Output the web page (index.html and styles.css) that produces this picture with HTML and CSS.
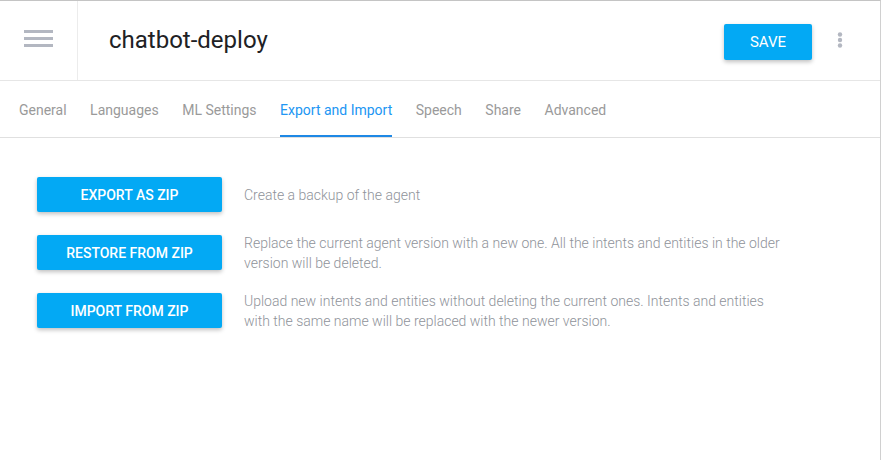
FILE: index.html
```html
<!DOCTYPE html>
<html>
<head>
<meta charset="utf-8">
<link rel="stylesheet" href="styles.css">
</head>
<body>
<div class="frame">
  <header class="header">
    <div class="menu-cell">
      <svg class="hamburger" width="30" height="18" viewBox="0 0 30 18">
        <rect x="0" y="0" width="29" height="3" fill="#b3b7c1"/>
        <rect x="0" y="7" width="29" height="3" fill="#b3b7c1"/>
        <rect x="0" y="14" width="29" height="3" fill="#b3b7c1"/>
      </svg>
    </div>
    <div class="title-cell">
      <h1 class="title">chatbot-deploy</h1>
      <div class="actions">
        <button class="btn save">SAVE</button>
        <svg class="kebab" width="6" height="16" viewBox="0 0 6 16">
          <circle cx="3" cy="2.5" r="2.2" fill="#b3b7c1"/>
          <circle cx="3" cy="8" r="2.2" fill="#b3b7c1"/>
          <circle cx="3" cy="13.5" r="2.2" fill="#b3b7c1"/>
        </svg>
      </div>
    </div>
  </header>
  <nav class="tabs">
    <span class="tab">General</span>
    <span class="tab">Languages</span>
    <span class="tab">ML Settings</span>
    <span class="tab active">Export and Import</span>
    <span class="tab">Speech</span>
    <span class="tab">Share</span>
    <span class="tab">Advanced</span>
  </nav>
  <main class="content">
    <div class="row">
      <button class="btn action">EXPORT AS ZIP</button>
      <p class="desc">Create a backup of the agent</p>
    </div>
    <div class="row">
      <button class="btn action">RESTORE FROM ZIP</button>
      <p class="desc">Replace the current agent version with a new one. All the intents and entities in the older version will be deleted.</p>
    </div>
    <div class="row">
      <button class="btn action">IMPORT FROM ZIP</button>
      <p class="desc">Upload new intents and entities without deleting the current ones. Intents and entities with the same name will be replaced with the newer version.</p>
    </div>
  </main>
</div>
</body>
</html>
```
FILE: styles.css
```css
html, body {
  margin: 0;
  padding: 0;
  background: #fff;
}
body {
  font-family: Roboto, "Liberation Sans", sans-serif;
}
.frame {
  width: 880px;
  height: 459px;
  border-top: 1px solid #c4c4c4;
  border-right: 1px solid #d0d0d0;
  background: #fff;
}
.header {
  display: flex;
  height: 79px;
  border-bottom: 1px solid #e6e6e6;
}
.menu-cell {
  width: 78px;
  border-right: 1px solid #ececec;
  display: flex;
  align-items: flex-start;
  padding-left: 24px;
  box-sizing: border-box;
}
.hamburger {
  margin-top: 29px;
  display: block;
}
.title-cell {
  flex: 1;
  display: flex;
  align-items: center;
  justify-content: space-between;
  padding-left: 31px;
  padding-right: 37px;
}
.title {
  margin: 0;
  font-size: 24px;
  font-weight: 400;
  color: #202124;
  margin-top: -2px;
}
.actions {
  display: flex;
  align-items: center;
  gap: 25px;
}
.btn {
  border: none;
  background: #03a9f4;
  color: #fff;
  font-family: Roboto, "Liberation Sans", sans-serif;
  font-weight: 500;
  font-size: 14px;
  border-radius: 2px;
  box-shadow: 0 2px 4px rgba(0,0,0,0.25);
  cursor: pointer;
}
.save {
  width: 88px;
  height: 36px;
  margin-top: 2px;
  font-weight: 400;
  font-size: 15px;
}
.kebab {
  display: block;
  margin-top: -1px;
}
.tabs {
  display: flex;
  gap: 23.5px;
  height: 56px;
  padding-left: 19px;
  border-bottom: 1px solid #e0e0e0;
}
.tab {
  font-size: 14px;
  color: #9a9a9a;
  line-height: 58px;
  height: 54px;
  border-bottom: 2px solid transparent;
}
.tab.active {
  color: #2196f3;
  border-bottom-color: #1e88e5;
}
.content {
  padding: 39px 0 0 37px;
  display: flex;
  flex-direction: column;
  gap: 23px;
}
.row {
  display: flex;
  align-items: center;
  gap: 22px;
  height: 35px;
}
.action {
  width: 185px;
  height: 35px;
  flex: none;
}
.desc {
  margin: 0;
  font-size: 14px;
  font-weight: 300;
  line-height: 20px;
  color: #8f939a;
  width: 548px;
}
```
